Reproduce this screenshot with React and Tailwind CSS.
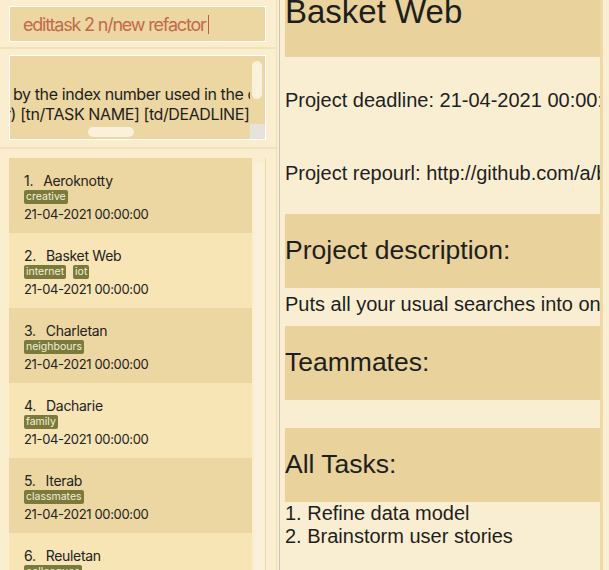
const tasks = [
  { id: 1, name: "Aeroknotty", tags: ["creative"], date: "21-04-2021 00:00:00" },
  { id: 2, name: "Basket Web", tags: ["internet", "iot"], date: "21-04-2021 00:00:00" },
  { id: 3, name: "Charletan", tags: ["neighbours"], date: "21-04-2021 00:00:00" },
  { id: 4, name: "Dacharie", tags: ["family"], date: "21-04-2021 00:00:00" },
  { id: 5, name: "Iterab", tags: ["classmates"], date: "21-04-2021 00:00:00" },
  { id: 6, name: "Reuletan", tags: ["colleagues"], date: "21-04-2021 00:00:00" },
];

function TaskCard({ task, index }) {
  const dark = index % 2 === 0;
  return (
    <div className={`h-[75px] shrink-0 pl-[15px] pt-[13px] ${dark ? "bg-[#ecd6a1]" : "bg-[#f7e5b6]"}`}>
      <div className="text-[14px] tracking-[-0.3px] leading-[19px] text-[#222]">
        <span>{task.id}.</span>
        <span className="ml-[10px]">{task.name}</span>
      </div>
      <div className="flex gap-[7px] h-[14px]">
        {task.tags.map((t) => (
          <span key={t} className="bg-[#7a7a3d] text-[#f5efd6] text-[10.5px] leading-[14px] px-[2px] rounded-[2px]">
            {t}
          </span>
        ))}
      </div>
      <div className="text-[13px] tracking-[-0.35px] leading-[20px] text-[#222]">{task.date}</div>
    </div>
  );
}

function Section({ children }) {
  return (
    <div className="h-[74px] flex items-center bg-[#e9d29b] text-[26.5px] text-[#1e1e1e] whitespace-nowrap">
      {children}
    </div>
  );
}

export default function App() {
  return (
    <div className="h-[570px] w-[609px] flex overflow-hidden bg-[#faeed2]">
      {/* left side */}
      <div className="w-[277px] shrink-0 flex flex-col bg-[#faeecf] border-r border-[#efdfb7] font-['Inter',sans-serif]">
        <div className="pt-[6px] pl-[9px] pr-[10px] pb-[5px] border-b-2 border-[#f1e2bd]">
          <div className="h-[36px] bg-[#ecd6a2] border border-white flex items-center pl-[13px] text-[18px] tracking-[-1.2px] text-[#c4694c]">
            edittask 2 n/new refactor
            <span className="ml-[2px] w-px h-[19px] bg-[#c0603f]" />
          </div>
        </div>
        <div className="pt-[6px] pl-[9px] pr-[10px] pb-[7px] border-b-2 border-[#f1e2bd]">
          <div className="relative h-[85px] bg-[#ecd6a2] border border-white overflow-hidden">
            <div className="pt-[28px] text-[16px] tracking-[-0.4px] leading-[20px] text-[#1e1e1e] whitespace-nowrap w-[240px] overflow-hidden">
              <div className="ml-[3px]">by the index number used in the displayed task list.</div>
              <div className="-ml-[5px]">r) [tn/TASK NAME] [td/DEADLINE] [tt/TAG]</div>
            </div>
            <div className="absolute left-[242px] top-[5px] w-[10px] h-[38px] rounded-[5px] bg-[#faf1da]" />
            <div className="absolute left-[78px] top-[71px] w-[46px] h-[10px] rounded-[5px] bg-[#faf1da]" />
            <div className="absolute left-[240px] top-[68px] w-[15px] h-[15px] bg-[#e6e3dd]" />
          </div>
        </div>
        <div className="flex-1 min-h-0 pt-[9px] pl-[9px] pr-[10px] flex">
          <div className="flex-1 flex flex-col overflow-hidden">
            {tasks.map((t, i) => (
              <TaskCard key={t.id} task={t} index={i} />
            ))}
          </div>
          <div className="w-[14px] pl-[2px] pt-[4px] border-r border-[#eddaa9]">
            <div className="w-[10px] h-full rounded-t-[5px] bg-[#faf1da]" />
          </div>
        </div>
      </div>
      <div className="w-[2px] shrink-0" />
      <div className="w-px shrink-0 bg-[#cbc3b3]" />

      {/* right side */}
      <div className="flex-1 flex pl-[5px] font-['Liberation_Sans',Arial,sans-serif] text-[#1e1e1e]">
        <div className="w-[315px] shrink-0 overflow-hidden">
          <div className="h-[57px] bg-[#e9d29b] overflow-hidden whitespace-nowrap">
            <div className="-mt-[7px] text-[33px] leading-[38px]">Basket Web</div>
          </div>
          <div className="pt-[32px] text-[20px] leading-[23px] whitespace-nowrap">
            Project deadline: 21-04-2021 00:00:00
          </div>
          <div className="pt-[50px] text-[20px] leading-[23px] whitespace-nowrap">
            Project repourl: http://github.com/a/basketweb
          </div>
          <div className="h-[29px]" />
          <Section>Project description:</Section>
          <div className="h-[38px] pt-[5px] text-[20px] leading-[23px] whitespace-nowrap">
            Puts all your usual searches into one place
          </div>
          <Section>Teammates:</Section>
          <div className="h-[28px]" />
          <Section>All Tasks:</Section>
          <div className="text-[20px] leading-[23px] whitespace-nowrap">
            <div>1. Refine data model</div>
            <div>2. Brainstorm user stories</div>
          </div>
        </div>
        <div className="w-[3px] shrink-0 bg-[#eed8a5]" />
      </div>
    </div>
  );
}
